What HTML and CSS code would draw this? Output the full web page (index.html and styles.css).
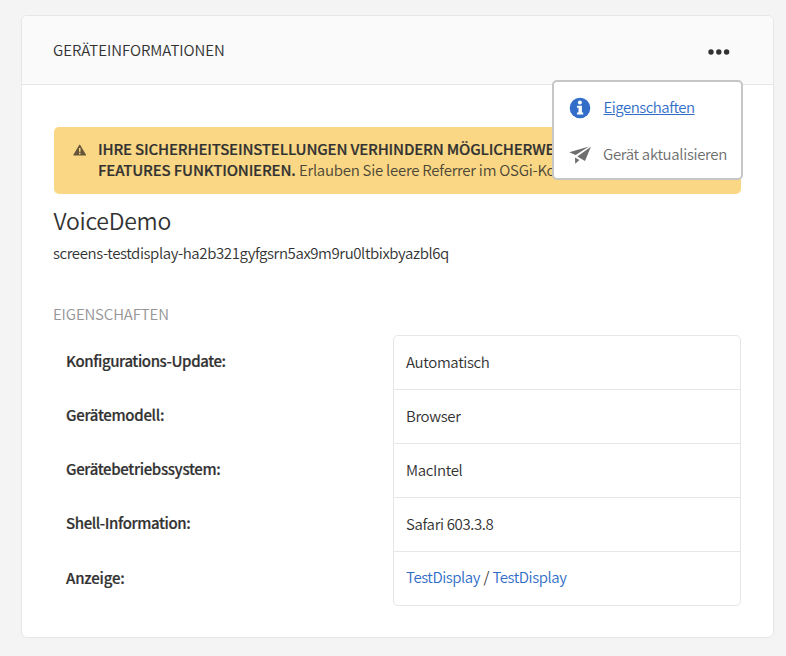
FILE: index.html
```html
<!DOCTYPE html>
<html lang="de">
<head>
<meta charset="utf-8">
<title>Geräteinformationen</title>
<link rel="stylesheet" href="styles.css">
</head>
<body>
<main class="card">
  <header class="card-header">
    <h1 class="card-title">GERÄTEINFORMATIONEN</h1>
    <button class="more" aria-label="Mehr">
      <svg width="22" height="6" viewBox="0 0 22 6"><circle cx="3" cy="3" r="2.7"/><circle cx="10.8" cy="3" r="2.7"/><circle cx="18.6" cy="3" r="2.7"/></svg>
    </button>
    <nav class="menu">
      <a class="menu-item active" href="#">
        <svg class="menu-icon" width="22" height="22" viewBox="0 0 22 22"><circle cx="11" cy="11" r="10.3" fill="#326ec8"/><circle cx="10.9" cy="5.4" r="2" fill="#fff"/><path fill="#fff" d="M8 8.8h4.9v6.6h1.3v2H8v-2h1.5v-4.6H8z"/></svg>
        <span class="menu-label label-props">Eigenschaften</span>
      </a>
      <a class="menu-item" href="#">
        <svg class="menu-icon" width="22" height="22" viewBox="0 0 22 22"><path fill="#6e6e6e" d="M.3 9.3 20 3.6 6.6 12zM21.9 3.7 16 18 8.3 13.6zM6 14.5l4.4 2.4L6.2 20.8z"/></svg>
        <span class="menu-label label-refresh">Gerät aktualisieren</span>
      </a>
    </nav>
  </header>
  <section class="card-body">
    <div class="alert">
      <svg class="alert-icon" width="14" height="12" viewBox="0 0 14 12"><path fill="#65553a" d="M6.2.9Q6.7.1 7.2.9l5.8 9.9q.3.7-.4.7H.8q-.7 0-.4-.7z"/><path fill="#fad784" d="M6 4h1.5v3.8H6zM6 8.8h1.5v1.4H6z"/></svg>
      <p class="alert-text">
        <strong class="alert-line1">IHRE SICHERHEITSEINSTELLUNGEN VERHINDERN MÖGLICHERWEISE</strong><br>
        <strong class="alert-line2">FEATURES FUNKTIONIEREN.</strong> <span class="alert-detail">Erlauben Sie leere Referrer im OSGi-Konfiguration</span>
      </p>
    </div>
    <h2 class="device-name">VoiceDemo</h2>
    <p class="device-id">screens-testdisplay-ha2b321gyfgsrn5ax9m9ru0ltbixbyazbl6q</p>
    <h3 class="section-title">EIGENSCHAFTEN</h3>
    <div class="properties">
      <dl class="labels">
        <dt class="config">Konfigurations-Update:</dt>
        <dt class="model">Gerätemodell:</dt>
        <dt class="os">Gerätebetriebssystem:</dt>
        <dt class="shell">Shell-Information:</dt>
        <dt class="display">Anzeige:</dt>
      </dl>
      <ul class="values">
        <li>Automatisch</li>
        <li>Browser</li>
        <li>MacIntel</li>
        <li>Safari 603.3.8</li>
        <li class="links"><a href="#">TestDisplay</a> / <a href="#">TestDisplay</a></li>
      </ul>
    </div>
  </section>
</main>
</body>
</html>
```
FILE: styles.css
```css
* { box-sizing: border-box; margin: 0; padding: 0; }
body {
  padding: 15px 12px 18px 21px;
  background: #f4f4f4;
  color: #323232;
  font: 15px/20px "Noto Sans CJK SC", "Noto Sans", sans-serif;
  height: 656px;
  overflow: hidden;
}
a { color: #326ec8; text-decoration: none; }
.card {
  height: 623px;
  background: #fff;
  border: 1px solid #e6e6e6;
  border-radius: 6px;
}
.card-header {
  position: relative;
  display: flex;
  justify-content: space-between;
  align-items: center;
  height: 69px;
  padding: 0 43px 0 31px;
  background: #fafafa;
  border-bottom: 1px solid #e6e6e6;
  border-radius: 5px 5px 0 0;
}
.card-title { font-size: 15px; font-weight: 350; letter-spacing: -0.04px; }
.more { display: flex; border: 0; background: none; padding-top: 3px; }
.more svg { fill: #323232; }
.menu {
  position: absolute;
  top: 64px;
  right: 30px;
  width: 191px;
  height: 100px;
  padding: 3px 0 0 15px;
  background: #fff;
  border: 2px solid #c6c6c6;
  border-radius: 5px;
}
.menu-item {
  display: flex;
  align-items: center;
  gap: 12px;
  height: 46px;
  color: #6e6e6e;
  white-space: nowrap;
  font-weight: 350;
  letter-spacing: -0.33px;
}
.menu-item.active { color: #326ec8; text-decoration: underline; letter-spacing: -0.5px; }
.label-props { margin: -3px 0 0 .5px; }
.card-body { padding: 42px 32px 0 32px; }
.alert {
  display: flex;
  height: 67px;
  padding: 11px 0 0 19px;
  background: #fad784;
  border-radius: 5px;
  overflow: hidden;
}
.alert-icon { flex: none; margin: 6px 11px 0 0; }
.alert-text { line-height: 21px; white-space: nowrap; }
.alert-text strong { font-weight: 500; letter-spacing: -0.17px; -webkit-text-stroke: .2px; }
.alert-detail { font-weight: 350; letter-spacing: -0.25px; color: #4b4637; }
.device-name { margin: 12px 0 0 -.5px; font-size: 23px; line-height: 28px; font-weight: 350; letter-spacing: -0.25px; }
.device-id { margin: 9px 0 0 -1px; font-weight: 350; letter-spacing: -0.4px; }
.section-title { margin: 41px 0 0 -1px; font-size: 15px; font-weight: 350; letter-spacing: -0.15px; color: #969696; }
.properties { display: grid; grid-template-columns: 339px 1fr; margin-top: 11px; }
.labels { padding-left: 12px; font-weight: 500; letter-spacing: -0.4px; -webkit-text-stroke: .2px; }
.labels dt { height: 54px; line-height: 52px; }
.labels .model { letter-spacing: -0.3px; }
.labels .os { letter-spacing: -0.34px; }
.labels .display { letter-spacing: -0.2px; line-height: 54px; }
.values { border: 1px solid #e6e6e6; border-radius: 5px; list-style: none; font-weight: 350; letter-spacing: -0.35px; }
.values li { height: 54px; line-height: 52px; padding-left: 12px; border-bottom: 1px solid #e6e6e6; }
.values li:last-child { height: 53px; line-height: 49px; border-bottom: 0; letter-spacing: -0.45px; word-spacing: .6px; }
```
